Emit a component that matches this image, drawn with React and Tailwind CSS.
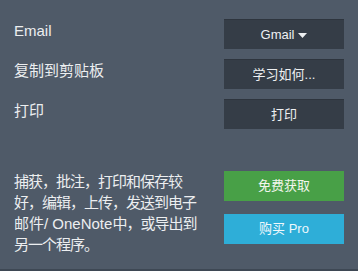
import React from 'react';

const font = { fontFamily: '"Liberation Sans", "Noto Sans CJK SC", sans-serif' };

const DarkButton = ({ children }) => (
  <button className="w-[120px] h-[30px] bg-[#353d47] border-t border-[#2e353e] text-[13px] text-[#eef0f2] flex items-center justify-center">
    {children}
  </button>
);

const Row = ({ label, children }) => (
  <div className="flex items-start justify-between">
    <span className="pt-[1px] text-[15px] leading-[22px] text-[#eceef0]">{label}</span>
    {children}
  </div>
);

export default function App() {
  return (
    <div className="w-[358px] h-[271px] bg-[#4f5a68] flex flex-col overflow-hidden" style={font}>
      <div className="flex-1 px-[14px] pt-[19px] flex flex-col">
        <div className="flex flex-col gap-[10px]">
          <Row label="Email">
            <DarkButton>
              Gmail
              <svg width="9" height="5" viewBox="0 0 9 5" className="ml-[4px] mt-[1px]">
                <path d="M0 0h9L4.5 5z" fill="#eef0f2" />
              </svg>
            </DarkButton>
          </Row>
          <Row label="复制到剪贴板">
            <DarkButton>学习如何...</DarkButton>
          </Row>
          <Row label="打印">
            <DarkButton>打印</DarkButton>
          </Row>
        </div>

        <div className="mt-[42px] flex items-start justify-between">
          <p className="text-[15px] leading-[21px] tracking-[-1px] text-[#eceef0]">
            捕获，批注，打印和保存较
            <br />
            好，编辑，上传，发送到电子
            <br />
            <span className="tracking-normal">邮件/ OneNote</span>中，或导出到
            <br />
            另一个程序。
          </p>
          <div className="flex flex-col gap-[13px]">
            <button className="w-[120px] h-[30px] bg-[#48a047] text-[13px] text-[#f2f6ee] flex items-center justify-center">
              免费获取
            </button>
            <button className="w-[120px] h-[30px] bg-[#2eaed8] text-[13px] text-[#eef8fc] flex items-center justify-center">
              购买 Pro
            </button>
          </div>
        </div>
      </div>
      <div className="h-[2px] bg-[#3e4854]" />
    </div>
  );
}
